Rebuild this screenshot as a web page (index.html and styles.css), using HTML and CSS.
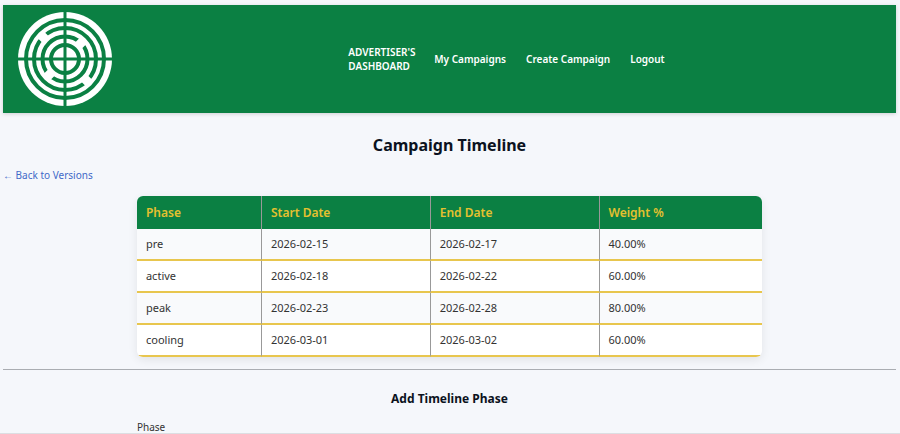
FILE: index.html
```html
<!DOCTYPE html>
<html lang="en">
<head>
<meta charset="utf-8">
<meta name="viewport" content="width=device-width, initial-scale=1">
<title>Campaign Timeline</title>
<link rel="stylesheet" href="styles.css">
</head>
<body>
<header class="site-header">
  <svg class="logo" viewBox="-48 -48 96 96" role="img" aria-label="Logo">
    <circle r="47" fill="#fff"/>
    <g fill="none" stroke="#0b8043" stroke-width="4">
      <circle r="39"/>
      <circle r="31"/>
      <circle r="22.5"/>
      <circle r="14"/>
    </g>
    <path stroke="#fff" stroke-width="9" d="M-25 -25 -19 -19M19 19 25 25M19 -19 13 -13M-19 19 -13 13"/>
    <path stroke="#0b8043" stroke-width="3" d="M0 -48V48M-48 0H48"/>
  </svg>
  <nav class="nav">
    <a class="nav-brand" href="#">ADVERTISER'S DASHBOARD</a>
    <a href="#">My Campaigns</a>
    <a href="#">Create Campaign</a>
    <a href="#">Logout</a>
  </nav>
</header>
<main class="page">
  <h1>Campaign Timeline</h1>
  <a class="back" href="#">← Back to Versions</a>
  <table class="timeline">
    <colgroup><col class="col-phase"><col class="col-date"><col class="col-date"><col></colgroup>
    <thead>
      <tr><th scope="col">Phase</th><th scope="col">Start Date</th><th scope="col">End Date</th><th scope="col">Weight %</th></tr>
    </thead>
    <tbody>
      <tr><td>pre</td><td>2026-02-15</td><td>2026-02-17</td><td>40.00%</td></tr>
      <tr><td>active</td><td>2026-02-18</td><td>2026-02-22</td><td>60.00%</td></tr>
      <tr><td>peak</td><td>2026-02-23</td><td>2026-02-28</td><td>80.00%</td></tr>
      <tr><td>cooling</td><td>2026-03-01</td><td>2026-03-02</td><td>60.00%</td></tr>
    </tbody>
  </table>
  <hr>
  <h2>Add Timeline Phase</h2>
  <div class="phase-form">Phase</div>
</main>
</body>
</html>
```
FILE: styles.css
```css
* {
  box-sizing: border-box;
}

body {
  margin: 0;
  background: #f5f7fb;
  color: #333;
  font: 11px/16px "Noto Sans", "Open Sans", sans-serif;
}

.site-header {
  display: flex;
  align-items: center;
  margin: 5px 4px 0 3px;
  padding: 6px 0 6px 14px;
  background: #0b8043;
  box-shadow: 0 1px 4px rgba(0, 0, 0, 0.16);
}

.logo {
  display: block;
  width: 96px;
  height: 96px;
  margin-right: 4px;
}

.nav {
  display: flex;
  align-items: center;
  gap: 20px;
  margin: 0 auto;
}

.nav a {
  color: #fff;
  font-size: 10px;
  font-weight: 600;
  line-height: 14px;
  text-decoration: none;
}

.nav .nav-brand {
  width: 66px;
}

.page {
  padding: 22px 4px 0 3px;
  border-bottom: 1px solid #dcdee2;
}

h1,
h2 {
  margin: 0;
  color: #0b1220;
  font-weight: 700;
  text-align: center;
}

h1 {
  font-size: 16px;
  line-height: 20px;
}

h2 {
  font-size: 12px;
  line-height: 16px;
}

.back {
  display: block;
  width: fit-content;
  margin-top: 12px;
  color: #4169c8;
  font-size: 10px;
  text-decoration: none;
}

.timeline {
  width: 70%;
  margin: 13px auto 12px;
  table-layout: fixed;
  border-spacing: 0;
  border-radius: 6px;
  overflow: hidden;
  background: #fff;
  box-shadow: 0 3px 10px rgba(0, 0, 0, 0.08);
}

.col-phase {
  width: 20%;
}

.col-date {
  width: 27%;
}

th,
td {
  padding: 7px 9px;
  border-right: 1px solid #999;
  text-align: left;
}

th:last-child,
td:last-child {
  border-right: 0;
}

th {
  padding: 9px 9px 8px;
  background: #0b8043;
  color: #e5c12f;
  font-size: 12px;
  font-weight: 600;
}

td {
  border-bottom: 2px solid #e8c64e;
}

tbody tr:nth-child(odd) {
  background: #f9fafc;
}

hr {
  margin: 0 0 21px;
  border: 0;
  border-top: 1px solid #aaadb2;
}

.phase-form {
  width: 70%;
  margin: 14px auto 0;
  font-size: 10px;
  line-height: 12px;
}
```
